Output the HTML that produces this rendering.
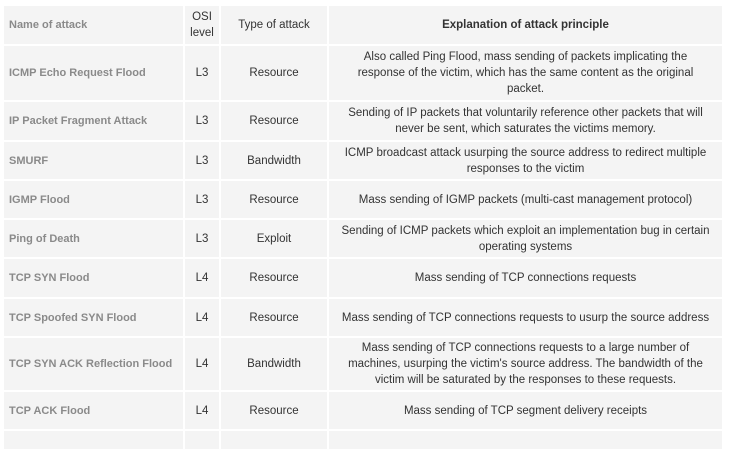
<!DOCTYPE html>
<html><head><style>
html,body{margin:0;width:729px;height:436px;overflow:hidden;background:#fff;font-family:"Liberation Sans",sans-serif;font-size:11.5px;color:#333}
table{position:absolute;left:2px;top:4px;border-collapse:collapse;width:722px;table-layout:fixed}
td,th{background:#f4f4f4;border:2px solid #fff;padding:0 6px;line-height:16px;text-align:center;font-weight:normal}
th{font-weight:bold;color:#333}
td:first-child,th:first-child{text-align:left;color:#8a8a8a;font-weight:bold;white-space:nowrap;font-size:11px;padding-left:5px}
</style></head><body>
<table>
<colgroup><col style="width:181px"><col style="width:36px"><col style="width:108px"><col></colgroup>
<tr style="height:40px"><th>Name of attack</th><th style="font-weight:normal;padding:0">OSI level</th><th style="font-weight:normal">Type of attack</th><th>Explanation of attack principle</th></tr>
<tr style="height:56px"><td>ICMP Echo Request Flood</td><td>L3</td><td>Resource</td><td style="padding:0 14px">Also called Ping Flood, mass sending of packets implicating the response of the victim, which has the same content as the original packet.</td></tr>
<tr style="height:40px"><td>IP Packet Fragment Attack</td><td>L3</td><td>Resource</td><td>Sending of IP packets that voluntarily reference other packets that will never be sent, which saturates the victims memory.</td></tr>
<tr style="height:39px"><td>SMURF</td><td>L3</td><td>Bandwidth</td><td>ICMP broadcast attack usurping the source address to redirect multiple responses to the victim</td></tr>
<tr style="height:39px"><td>IGMP Flood</td><td>L3</td><td>Resource</td><td>Mass sending of IGMP packets (multi-cast management protocol)</td></tr>
<tr style="height:39px"><td>Ping of Death</td><td>L3</td><td>Exploit</td><td>Sending of ICMP packets which exploit an implementation bug in certain operating systems</td></tr>
<tr style="height:40px"><td>TCP SYN Flood</td><td>L4</td><td>Resource</td><td>Mass sending of TCP connections requests</td></tr>
<tr style="height:39px"><td>TCP Spoofed SYN Flood</td><td>L4</td><td>Resource</td><td>Mass sending of TCP connections requests to usurp the source address</td></tr>
<tr style="height:54px"><td>TCP SYN ACK Reflection Flood</td><td>L4</td><td>Bandwidth</td><td>Mass sending of TCP connections requests to a large number of machines, usurping the victim's source address. The bandwidth of the victim will be saturated by the responses to these requests.</td></tr>
<tr style="height:39px"><td>TCP ACK Flood</td><td>L4</td><td>Resource</td><td>Mass sending of TCP segment delivery receipts</td></tr>
<tr style="height:20px"><td></td><td></td><td></td><td></td></tr>
</table>
</body></html>
